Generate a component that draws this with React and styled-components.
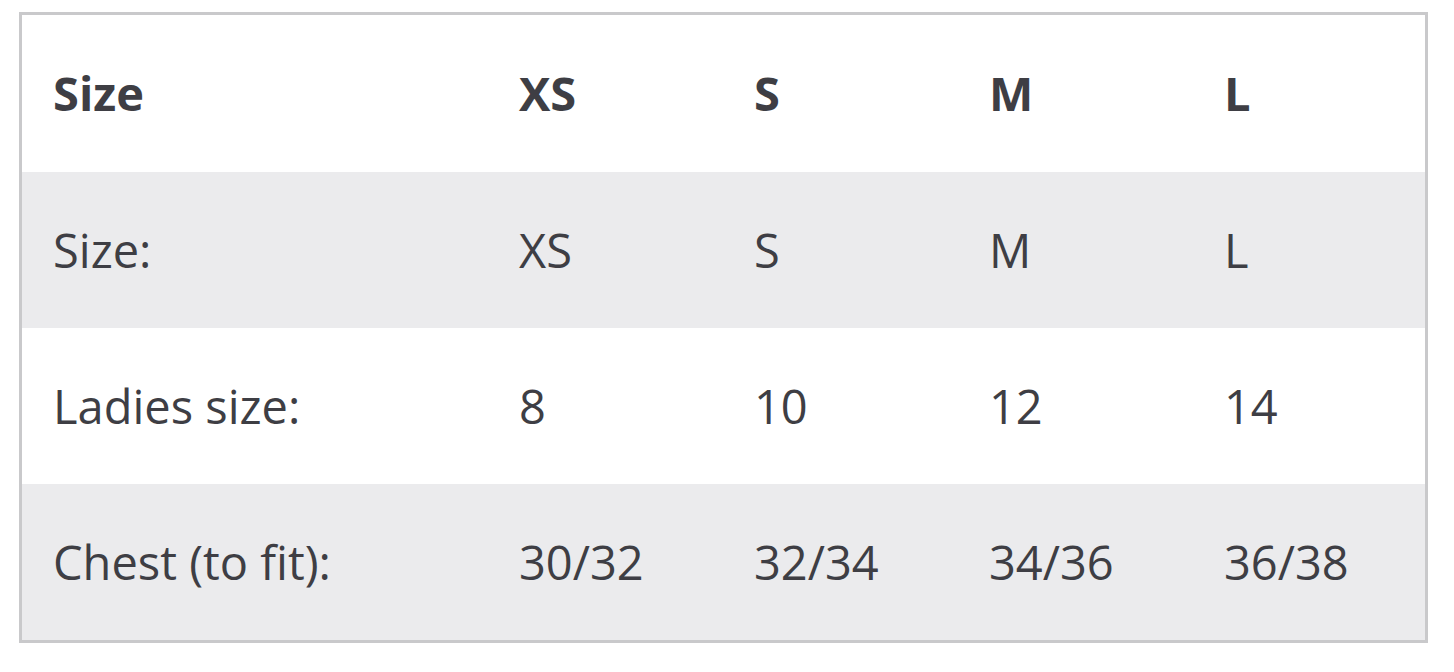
import React from 'react';
import styled, { createGlobalStyle } from 'styled-components';

const GlobalStyle = createGlobalStyle`
  body {
    margin: 0;
    background: #ffffff;
    font-family: 'Open Sans', 'Liberation Sans', sans-serif;
  }
`;

const Page = styled.div`
  padding: 12px 26px 0 19px;
`;

const SizeTable = styled.div`
  width: 1409px;
  box-sizing: border-box;
  border: 3px solid #c9c9cb;
  color: #3e3e44;
  font-size: 47px;
  line-height: 1;
`;

const Row = styled.div`
  display: grid;
  grid-template-columns: 466px 235px 235px 235px 1fr;
  align-items: center;
  height: ${(p) => (p.$head ? '157px' : '156px')};
  background: ${(p) => (p.$shaded ? '#ebebed' : '#ffffff')};
  font-weight: ${(p) => (p.$head ? 700 : 400)};
`;

const Cell = styled.div`
  padding-left: 31px;
  white-space: nowrap;
`;

const header = ['Size', 'XS', 'S', 'M', 'L'];

const rows = [
  ['Size:', 'XS', 'S', 'M', 'L'],
  ['Ladies size:', '8', '10', '12', '14'],
  ['Chest (to fit):', '30/32', '32/34', '34/36', '36/38'],
];

const App = () => (
  <>
    <GlobalStyle />
    <Page>
      <SizeTable>
        <Row $head>
          {header.map((h) => (
            <Cell key={h}>{h}</Cell>
          ))}
        </Row>
        {rows.map((r, i) => (
          <Row key={r[0]} $shaded={i % 2 === 0}>
            {r.map((c) => (
              <Cell key={c}>{c}</Cell>
            ))}
          </Row>
        ))}
      </SizeTable>
    </Page>
  </>
);

export default App;
